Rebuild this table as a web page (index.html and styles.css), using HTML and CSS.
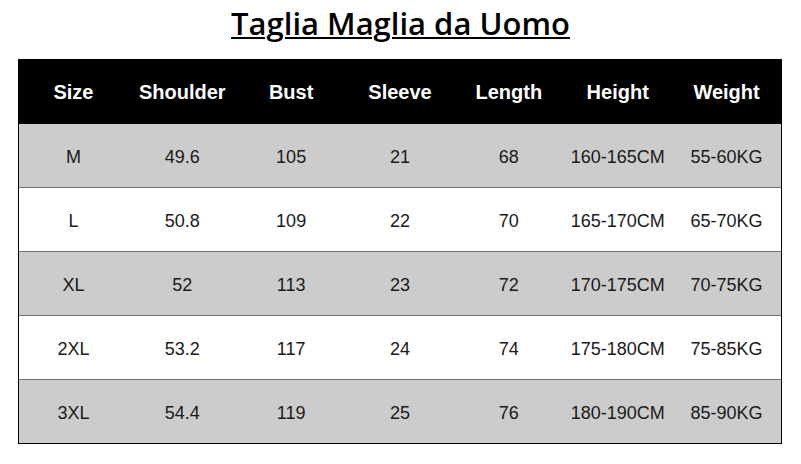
FILE: index.html
```html
<!DOCTYPE html>
<html>
<head>
<meta charset="utf-8">
<link rel="stylesheet" href="styles.css">
</head>
<body>
<h1 class="title">Taglia Maglia da Uomo</h1>
<div class="chart">
  <div class="row head">
    <div>Size</div><div>Shoulder</div><div>Bust</div><div>Sleeve</div><div>Length</div><div>Height</div><div>Weight</div>
  </div>
  <div class="row grey">
    <div>M</div><div>49.6</div><div>105</div><div>21</div><div>68</div><div>160-165CM</div><div>55-60KG</div>
  </div>
  <div class="row white">
    <div>L</div><div>50.8</div><div>109</div><div>22</div><div>70</div><div>165-170CM</div><div>65-70KG</div>
  </div>
  <div class="row grey">
    <div>XL</div><div>52</div><div>113</div><div>23</div><div>72</div><div>170-175CM</div><div>70-75KG</div>
  </div>
  <div class="row white">
    <div>2XL</div><div>53.2</div><div>117</div><div>24</div><div>74</div><div>175-180CM</div><div>75-85KG</div>
  </div>
  <div class="row grey last">
    <div>3XL</div><div>54.4</div><div>119</div><div>25</div><div>76</div><div>180-190CM</div><div>85-90KG</div>
  </div>
</div>
</body>
</html>
```
FILE: styles.css
```css
html, body {
  margin: 0;
  padding: 0;
  background: #ffffff;
}
body {
  width: 801px;
  height: 464px;
  overflow: hidden;
}
.title {
  margin: 0;
  padding-top: 4px;
  height: 54px;
  box-sizing: border-box;
  text-align: center;
  font-family: "Open Sans", sans-serif;
  font-weight: 600;
  font-size: 31px;
  line-height: 38px;
  color: #000;
  text-decoration: underline;
  text-decoration-thickness: 2px;
  text-underline-offset: 2px;
}
.chart {
  margin: 5px 0 0 18px;
  width: 764px;
  border: 1px solid #000;
  box-sizing: border-box;
}
.row {
  display: grid;
  grid-template-columns: repeat(7, 1fr);
  height: 64px;
  padding-top: 3px;
  align-items: center;
  text-align: center;
  font-family: "Liberation Sans", Arial, sans-serif;
  font-size: 18px;
  color: #1a1a1a;
  border-bottom: 1px solid #707070;
  box-sizing: border-box;
}
.row.head {
  background: #000;
  color: #fff;
  font-family: "Liberation Sans Narrow", "Liberation Sans", sans-serif;
  font-weight: bold;
  font-size: 20px;
  border-bottom: none;
  height: 64px;
  padding-top: 1px;
}
.row.grey { background: #cccccc; }
.row.white { background: #ffffff; }
.row.last { border-bottom: none; height: 63px; }
```
